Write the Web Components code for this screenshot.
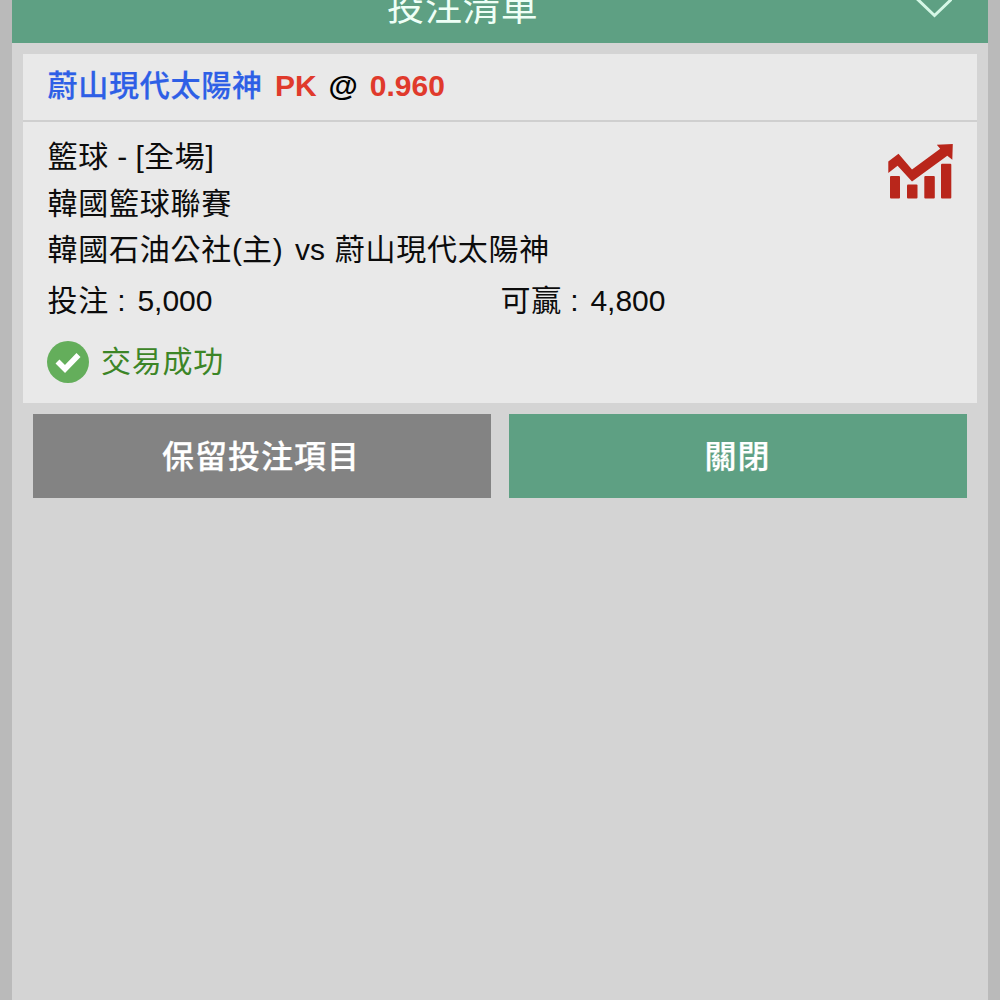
<!DOCTYPE html>
<html lang="zh-Hant">
<head>
<meta charset="utf-8">
<title>投注清單</title>
<style>
html,body{margin:0;height:1000px;overflow:hidden;background:#bababa}
body{font-family:"Liberation Sans","Noto Sans CJK TC",sans-serif;font-size:30px;color:#0c0c0c}
</style>
</head>
<body>
<bet-panel>
  <panel-header slot="header">投注清單</panel-header>
  <bet-card>
    <cjk-text slot="team">蔚山現代太陽神</cjk-text>
    <span slot="handicap">PK</span>
    <span slot="odds">0.960</span>
    <bet-line><cjk-text>籃球</cjk-text> - [<cjk-text>全場</cjk-text>]</bet-line>
    <bet-line><cjk-text>韓國籃球聯賽</cjk-text></bet-line>
    <bet-line><cjk-text>韓國石油公社</cjk-text>(<cjk-text>主</cjk-text>) <span style="margin:0 1.5px 0 4px">vs</span> <cjk-text>蔚山現代太陽神</cjk-text></bet-line>
    <bet-amount slot="amounts" value="5,000">投注</bet-amount>
    <bet-amount slot="amounts" value="4,800">可贏</bet-amount>
    <bet-status slot="status">交易成功</bet-status>
  </bet-card>
  <action-button slot="actions">保留投注項目</action-button>
  <action-button slot="actions" style="--button-bg:#5ea083">關閉</action-button>
</bet-panel>
<script>
function define(name, markup, setup) {
  const template = document.createElement('template');
  template.innerHTML = markup;
  customElements.define(name, class extends HTMLElement {
    constructor() {
      super();
      this.attachShadow({mode: 'open'}).append(template.content.cloneNode(true));
    }
    connectedCallback() { if (setup) setup(this); }
  });
}

define('cjk-text', `<style>:host{display:inline;letter-spacing:.75px}</style><slot></slot>`);

define('bet-line', `<style>:host{display:block;line-height:46.5px;white-space:nowrap}</style><slot></slot>`);

define('bet-amount', `<style>
  :host{display:block;flex:0 0 453px;line-height:46.5px;white-space:nowrap}
  .value{margin-left:3.5px}
</style><cjk-text><slot></slot></cjk-text> : <span class="value"></span>`,
  el => { el.shadowRoot.querySelector('.value').textContent = el.getAttribute('value'); });

define('bet-status', `<style>
  :host{display:flex;align-items:center;gap:12px;line-height:42px;color:#3c8527}
  svg{display:block;width:42px;height:42px;margin-top:1px}
</style>
<svg viewBox="0 0 42 42"><circle cx="21" cy="21" r="21" fill="#64ae5b"/><path d="M10.5 20.5 18 28 31.5 14" fill="none" stroke="#fff" stroke-width="5.6"/></svg>
<cjk-text><slot></slot></cjk-text>`);

define('trend-icon', `<style>:host{display:block;width:65px;height:55px}svg{display:block}</style>
<svg width="65" height="55" viewBox="888 143.5 65 55" fill="#b9261b">
  <rect x="890" y="175.5" width="10" height="22.5" rx="1"/>
  <rect x="907" y="184" width="10.5" height="14" rx="1"/>
  <rect x="924.3" y="175.5" width="10.5" height="22.5" rx="1"/>
  <rect x="941" y="163.3" width="10.3" height="34.7" rx="1"/>
  <path d="M888.3 161 898.5 153.2 912 168.9 940.2 148.3 936.8 144.2 952.8 143.5 952.3 159.3 947.3 155.2 912 181 897.6 165.2 888.3 172.5Z"/>
</svg>`);

define('panel-header', `<style>
  :host{display:flex;height:42.5px;background:#5ea083;color:#eefff6;overflow:hidden;align-items:flex-start;justify-content:space-between;box-sizing:border-box;padding:0 36px 0 375px}
  .title{font-size:37px;line-height:50px;letter-spacing:.9px;margin-top:-16px;white-space:nowrap}
  svg{display:block}
</style>
<div class="title"><slot></slot></div>
<svg width="36" height="19" viewBox="0 0 36 19"><path d="M-4-6 18.5 15.5 41-6" fill="none" stroke="#d5f7e6" stroke-width="3"/></svg>`);

define('bet-card', `<style>
  :host{display:block;background:#e9e9e9;height:349px;box-sizing:border-box}
  header{display:flex;gap:12px;height:68px;line-height:64px;box-sizing:border-box;border-bottom:2px solid #cfcfcf;padding-left:24px;font-weight:700}
  .team{color:#2e5fe6;font-weight:500;-webkit-text-stroke:.25px currentColor;width:215.5px;white-space:nowrap}
  .red{color:#e03a2c}
  .at{color:#000}
  .body{padding:12px 24px 0 24px}
  .top{display:flex;justify-content:space-between;align-items:flex-start}
  trend-icon{margin-top:10px}
  .amounts{display:flex;margin-top:4.6px}
  .status{margin-top:15.7px;margin-left:-.5px}
</style>
<header><span class="team"><slot name="team"></slot></span><span class="red"><slot name="handicap"></slot></span><span class="at">@</span><span class="red"><slot name="odds"></slot></span></header>
<div class="body">
  <div class="top"><div><slot></slot></div><trend-icon></trend-icon></div>
  <div class="amounts"><slot name="amounts"></slot></div>
  <div class="status"><slot name="status"></slot></div>
</div>`);

define('action-button', `<style>
  :host{display:block;flex:1}
  button{display:block;width:100%;height:84px;border:0;padding:2px 1.5px 0 0;background:var(--button-bg,#838383);color:#fff;font-family:inherit;font-size:32px;font-weight:500;line-height:82px;letter-spacing:1px;-webkit-text-stroke:.25px currentColor}
</style><button><slot></slot></button>`);

define('bet-panel', `<style>
  :host{display:block;box-sizing:border-box;height:1000px;margin:0 12px;background:#d4d4d4}
  .content{padding:11.5px 11.4px 0}
  .actions{display:flex;gap:18.5px;padding:11.4px 9.3px 0}
</style>
<slot name="header"></slot>
<div class="content"><slot></slot><div class="actions"><slot name="actions"></slot></div></div>`);
</script>
</body>
</html>
